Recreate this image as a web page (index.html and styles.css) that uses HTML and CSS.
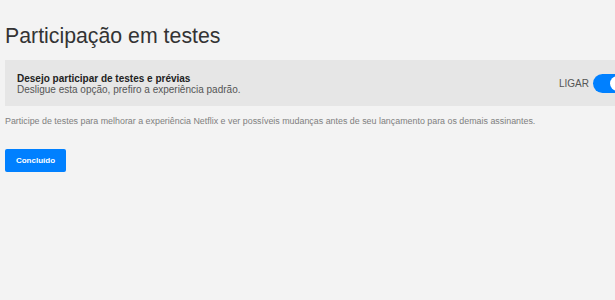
FILE: index.html
```html
<!DOCTYPE html>
<html lang="pt">
<head>
<meta charset="utf-8">
<title>Participação em testes</title>
<link rel="stylesheet" href="styles.css">
</head>
<body>
<main class="page">
  <h1 class="title">Participação em testes</h1>
  <section class="option">
    <div class="option-text">
      <div class="option-title">Desejo participar de testes e prévias</div>
      <div class="option-sub">Desligue esta opção, prefiro a experiência padrão.</div>
    </div>
    <div class="toggle-wrap">
      <span class="toggle-label">LIGAR</span>
      <span class="toggle"><span class="knob"></span></span>
    </div>
  </section>
  <p class="note">Participe de testes para melhorar a experiência Netflix e ver possíveis mudanças antes de seu lançamento para os demais assinantes.</p>
  <button class="done">Concluído</button>
</main>
</body>
</html>
```
FILE: styles.css
```css
html, body {
  margin: 0;
  padding: 0;
  background: #f3f3f3;
  overflow: hidden;
  font-family: "Liberation Sans", Arial, sans-serif;
}
.page {
  width: 624px;
  padding: 23px 0 0 5px;
}
.title {
  margin: 0;
  font-size: 21.3px;
  font-weight: normal;
  color: #333;
  line-height: 26px;
}
.option {
  margin-top: 11px;
  height: 46px;
  background: #e6e6e6;
  display: flex;
  align-items: center;
  justify-content: space-between;
  padding: 0 0 0 12px;
  box-sizing: border-box;
}
.option-text {
  font-size: 10px;
  line-height: 11px;
  color: #333;
  padding-top: 1px;
}
.option-title {
  font-weight: bold;
  color: #222;
}
.option-sub {
  color: #555;
}
.toggle-wrap {
  display: flex;
  align-items: center;
  gap: 4px;
  padding-top: 1px;
}
.toggle-label {
  font-size: 10px;
  color: #555;
}
.toggle {
  width: 36px;
  height: 19px;
  border-radius: 10px;
  background: #0080ff;
  position: relative;
}
.knob {
  position: absolute;
  left: 17px;
  top: 2px;
  width: 15px;
  height: 15px;
  border-radius: 50%;
  background: #fff;
}
.note {
  margin: 10px 0 0;
  font-size: 8.9px;
  line-height: 11px;
  color: #808080;
}
.done {
  margin-top: 22px;
  width: 61px;
  height: 23px;
  border: none;
  border-radius: 2px;
  background: #0080ff;
  color: #fff;
  font-family: "Liberation Sans", Arial, sans-serif;
  font-size: 8px;
  font-weight: bold;
  padding: 0;
}
```
